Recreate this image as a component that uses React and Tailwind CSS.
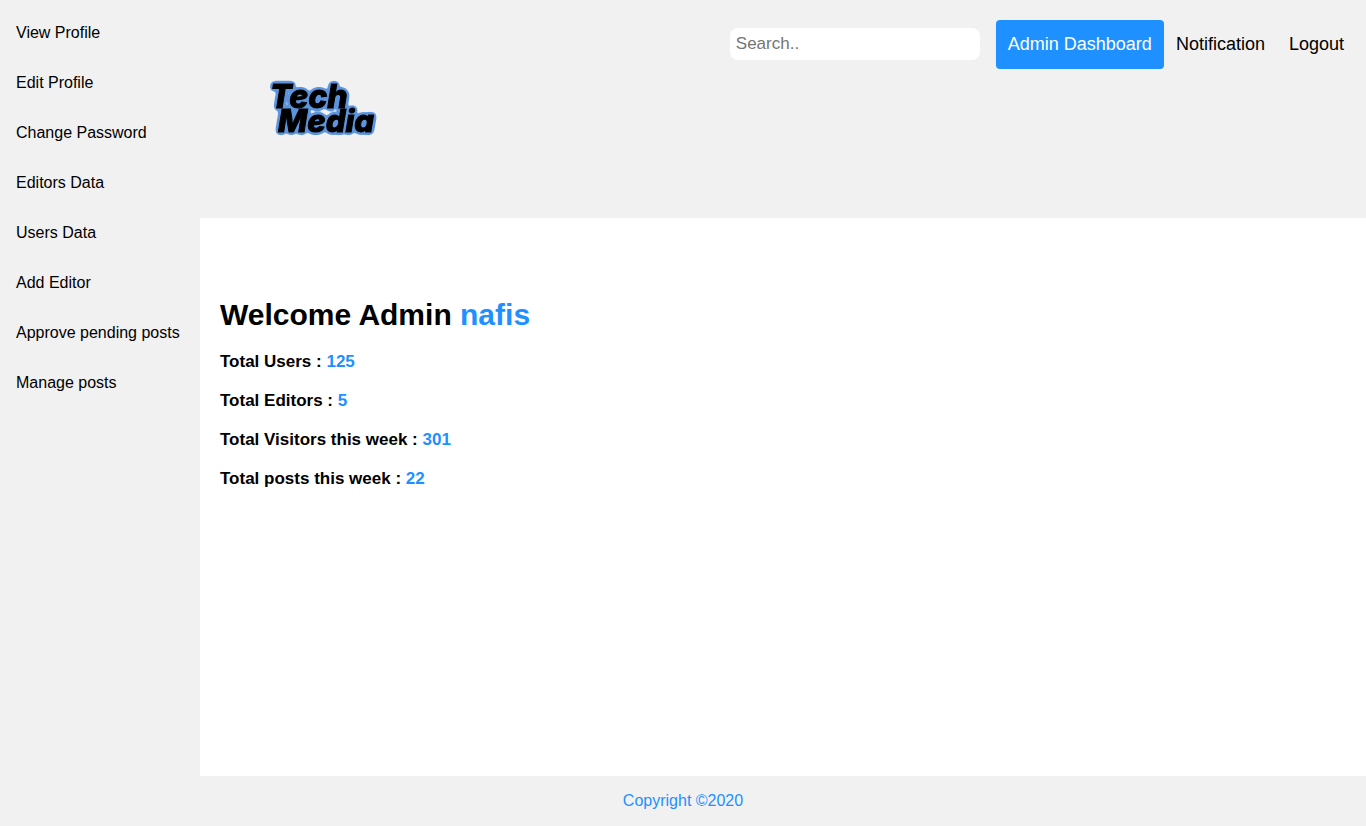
const sideLinks = [
  "View Profile",
  "Edit Profile",
  "Change Password",
  "Editors Data",
  "Users Data",
  "Add Editor",
  "Approve pending posts",
  "Manage posts",
];

const stats = [
  { label: "Total Users", value: 125 },
  { label: "Total Editors", value: 5 },
  { label: "Total Visitors this week", value: 301 },
  { label: "Total posts this week", value: 22 },
];

function Logo() {
  return (
    <svg
      viewBox="0 0 204 178"
      className="h-[178px] w-[204px]"
      role="img"
      aria-label="Tech Media"
    >
      {/* Rounded blue halo behind both words */}
      <filter
        id="halo"
        filterUnits="userSpaceOnUse"
        x="0"
        y="0"
        width="204"
        height="178"
        colorInterpolationFilters="sRGB"
      >
        <feGaussianBlur in="SourceAlpha" stdDeviation="2" result="soft" />
        <feComponentTransfer in="soft" result="edge">
          <feFuncA type="linear" slope="12" intercept="-0.8" />
        </feComponentTransfer>
        <feFlood floodColor="#5c95dd" />
        <feComposite in2="edge" operator="in" result="blue" />
        <feMerge>
          <feMergeNode in="blue" />
          <feMergeNode in="SourceGraphic" />
        </feMerge>
      </filter>
      <g
        filter="url(#halo)"
        className="font-['Inter',sans-serif] font-extrabold italic"
        stroke="#000"
        strokeWidth="1"
      >
        <text x="50" y="88" className="text-[32px]">Tech</text>
        <text x="58" y="112" className="text-[31px]">Media</text>
      </g>
    </svg>
  );
}

export default function App() {
  return (
    <div className="flex min-h-screen flex-col bg-white font-['Liberation_Sans',Arial,sans-serif] text-base text-black">
      <div className="flex grow">
        <aside className="w-50 shrink-0 bg-[#f1f1f1] pt-2">
          <nav aria-label="Account">
            {sideLinks.map((label) => (
              <a key={label} href="#" className="block whitespace-nowrap p-4 leading-[18px]">
                {label}
              </a>
            ))}
          </nav>
        </aside>

        <div className="flex min-w-0 grow flex-col">
          <header className="flex items-start justify-between bg-[#f1f1f1] pr-[10px] pl-5">
            <a href="#" className="block py-5">
              <Logo />
            </a>
            <div className="flex items-start gap-4 pt-5">
              <input
                type="search"
                aria-label="Search"
                placeholder="Search.."
                className="mt-2 h-8 w-[250px] rounded-lg bg-white px-[6px] text-[17px] outline-none placeholder:text-[#757575]"
              />
              <nav aria-label="Main" className="flex text-lg leading-[25px]">
                <a href="#" aria-current="page" className="rounded bg-[#1e90ff] p-3 text-white">
                  Admin Dashboard
                </a>
                <a href="#" className="rounded p-3">
                  Notification
                </a>
                <a href="#" className="rounded p-3">
                  Logout
                </a>
              </nav>
            </div>
          </header>

          <main className="px-5 pt-20 pb-8 font-bold">
            <h1 className="text-[30px] leading-[34px]">
              Welcome Admin <span className="text-[#1e90ff]">nafis</span>
            </h1>
            <div className="mt-5 flex flex-col gap-5 text-[17px] leading-[19px]">
              {stats.map(({ label, value }) => (
                <h2 key={label}>
                  {label} : <span className="text-[#1e90ff]">{value}</span>
                </h2>
              ))}
            </div>
          </main>
        </div>
      </div>

      <footer className="bg-[#f1f1f1] p-4 text-center leading-[18px] text-[#1e90ff]">
        Copyright ©2020
      </footer>
    </div>
  );
}
